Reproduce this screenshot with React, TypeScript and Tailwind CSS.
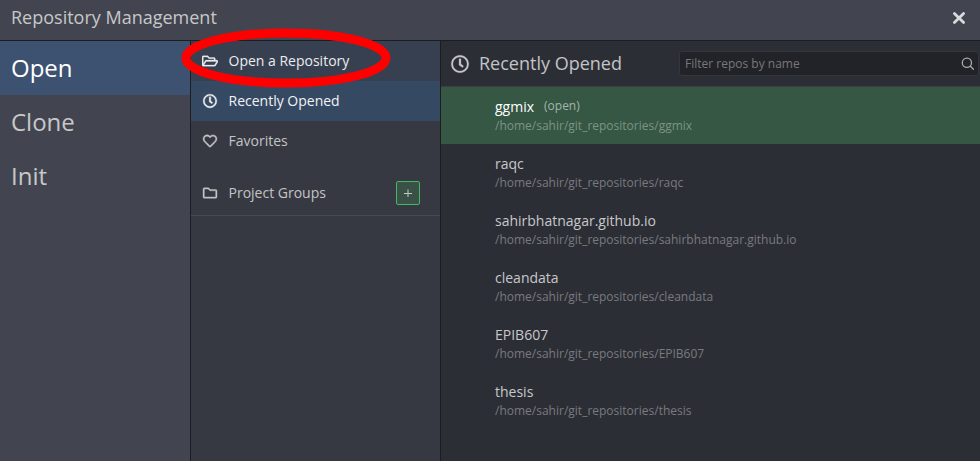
import React from 'react';
import { FaRegFolderOpen, FaRegClock, FaRegHeart, FaRegFolder } from 'react-icons/fa';

const repos = [
  { name: 'ggmix', open: true },
  { name: 'raqc' },
  { name: 'sahirbhatnagar.github.io' },
  { name: 'cleandata' },
  { name: 'EPIB607' },
  { name: 'thesis' },
];

function SideItem({ label, active }: { label: string; active?: boolean }) {
  return (
    <div className={`flex h-[54px] items-center pl-[11px] text-[24px] ${active ? 'bg-[#3d5270] text-white' : 'text-[#c7c8ca]'}`}>
      {label}
    </div>
  );
}

function MenuItem({ icon, label, className }: { icon: React.ReactNode; label: string; className: string }) {
  return (
    <div className={`flex h-10 items-center pl-[10px] text-[14px] ${className}`}>
      <span className="mr-[9.5px] flex w-[18px] justify-center">{icon}</span>
      <span className="leading-5">{label}</span>
    </div>
  );
}

export default function App() {
  return (
    <div className="relative flex h-[461px] w-[980px] flex-col overflow-hidden bg-[#42454f] font-['Open_Sans',sans-serif]">
      <header className="flex h-[41px] shrink-0 items-center justify-between border-b border-[#1c1d20] pr-[14px] pb-[6px] pl-[11px]">
        <h1 className="text-[18px] leading-6 text-[#c7c8ca]">Repository Management</h1>
        <svg className="mt-[2px] h-[14px] w-[14px]" viewBox="0 0 14 14" fill="none" stroke="#d9dadc" strokeWidth="2.8" strokeLinecap="round">
          <path d="M2.4 2.4 11.6 11.6M11.6 2.4 2.4 11.6" />
        </svg>
      </header>
      <div className="flex min-h-0 flex-1">
        <nav className="w-[191px] shrink-0 border-r border-[#1c1d20]">
          <SideItem label="Open" active />
          <SideItem label="Clone" />
          <SideItem label="Init" />
        </nav>
        <aside className="w-[250px] shrink-0 border-r border-[#1c1d20] bg-[#373942]">
          <MenuItem icon={<FaRegFolderOpen size={16} strokeWidth={10} />} label="Open a Repository" className="bg-[#374050] text-[#ebecee]" />
          <MenuItem icon={<FaRegClock size={14} strokeWidth={14} className="overflow-visible" />} label="Recently Opened" className="bg-[#364963] text-[#f1f2f4]" />
          <MenuItem icon={<FaRegHeart size={14} strokeWidth={14} className="overflow-visible" />} label="Favorites" className="text-[#c3c4c6]" />
          <div className="mt-2 flex h-[47px] items-center justify-between border-b border-[#484a53] pt-[1px] pr-5 text-[#c3c4c6]">
            <MenuItem icon={<FaRegFolder size={14} strokeWidth={14} className="overflow-visible" />} label="Project Groups" className="" />
            <button className="flex h-6 w-6 items-center justify-center rounded-[2px] border border-[#45b864] bg-[#3a5147]">
              <svg width="8" height="8" viewBox="0 0 8 8" stroke="#c3c9c6" strokeWidth="1"><path d="M0 4.5H8M4 0.5V8" /></svg>
            </button>
          </div>
        </aside>
        <main className="flex min-w-0 flex-1 flex-col bg-[#2c2e36]">
          <div className="flex h-[46px] items-center border-b border-[#3c3e46] pr-[1px] pl-[10px]">
            <FaRegClock size={18} strokeWidth={8} className="overflow-visible text-[#c3c4c6]" />
            <h2 className="ml-[10px] flex-1 text-[18px] text-[#c3c4c6]">Recently Opened</h2>
            <div className="flex h-[25px] w-[300px] items-center justify-between rounded-[3px] border border-[#34363c] bg-[#222328] pr-1 pl-[5px]">
              <span className="text-[12px] text-[#77787c]">Filter repos by name</span>
              <svg width="13" height="13" viewBox="0 0 13 13" fill="none" stroke="#aaabae" strokeWidth="1.3" strokeLinecap="round">
                <circle cx="5.9" cy="5.7" r="4.6" />
                <path d="M9.4 9.2 12.4 12.2" />
              </svg>
            </div>
          </div>
          {repos.map((repo) => (
            <div key={repo.name} className={`h-[57px] pt-[10px] pl-[54px] ${repo.open ? 'bg-[#355743]' : ''}`}>
              <div className={`flex h-5 text-[14px] leading-5 ${repo.open ? 'text-white' : 'text-[#c7c8ca]'}`}>
                {repo.name}
                {repo.open && <span className="ml-[10px] text-[12px] leading-[18px] text-[#a6b5ac]">(open)</span>}
              </div>
              <div className={`text-[12px] leading-[18px] ${repo.open ? 'text-[#7d9486]' : 'text-[#797a7e]'}`}>
                /home/sahir/git_repositories/{repo.name}
              </div>
            </div>
          ))}
        </main>
      </div>
      <svg className="pointer-events-none absolute top-[26px] left-[180px]" width="214" height="64" viewBox="0 0 214 64" fill="none">
        <ellipse cx="106" cy="32" rx="100" ry="25.1" stroke="#ff0000" strokeWidth="9" />
      </svg>
    </div>
  );
}
